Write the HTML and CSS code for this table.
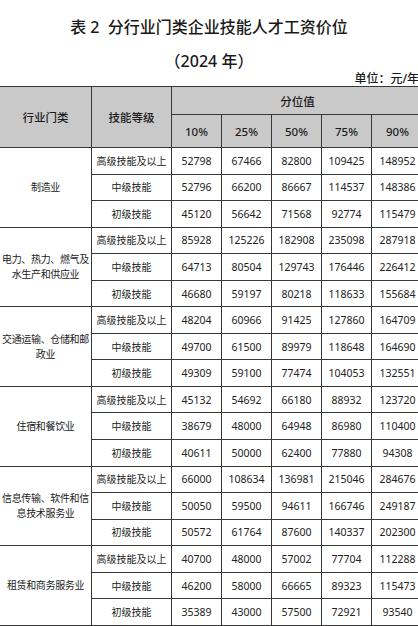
FILE: index.html
```html
<!DOCTYPE html>
<html lang="zh">
<head>
<meta charset="utf-8">
<link rel="stylesheet" href="styles.css">
</head>
<body>
<div class="page">
  <h1 class="title">表 2&nbsp; 分行业门类企业技能人才工资价位</h1>
  <div class="subtitle">（2024 年）</div>
  <div class="unit">单位：元/年</div>
  <table class="wage">
    <colgroup>
      <col class="c-ind"><col class="c-lvl"><col class="c-p"><col class="c-p"><col class="c-p"><col class="c-p"><col class="c-last">
    </colgroup>
    <thead>
      <tr class="h1">
        <th rowspan="2">行业门类</th>
        <th rowspan="2">技能等级</th>
        <th colspan="5">分位值</th>
      </tr>
      <tr class="h2">
        <th>10%</th><th>25%</th><th>50%</th><th>75%</th><th>90%</th>
      </tr>
    </thead>
    <tbody>
      <tr><td rowspan="3" class="ind">制造业</td><td class="lvl">高级技能及以上</td><td>52798</td><td>67466</td><td>82800</td><td>109425</td><td>148952</td></tr>
      <tr><td class="lvl">中级技能</td><td>52796</td><td>66200</td><td>86667</td><td>114537</td><td>148386</td></tr>
      <tr><td class="lvl">初级技能</td><td>45120</td><td>56642</td><td>71568</td><td>92774</td><td>115479</td></tr>

      <tr><td rowspan="3" class="ind">电力、热力、燃气及水生产和供应业</td><td class="lvl">高级技能及以上</td><td>85928</td><td>125226</td><td>182908</td><td>235098</td><td>287918</td></tr>
      <tr><td class="lvl">中级技能</td><td>64713</td><td>80504</td><td>129743</td><td>176446</td><td>226412</td></tr>
      <tr><td class="lvl">初级技能</td><td>46680</td><td>59197</td><td>80218</td><td>118633</td><td>155684</td></tr>

      <tr><td rowspan="3" class="ind">交通运输、仓储和邮政业</td><td class="lvl">高级技能及以上</td><td>48204</td><td>60966</td><td>91425</td><td>127860</td><td>164709</td></tr>
      <tr><td class="lvl">中级技能</td><td>49700</td><td>61500</td><td>89979</td><td>118648</td><td>164690</td></tr>
      <tr><td class="lvl">初级技能</td><td>49309</td><td>59100</td><td>77474</td><td>104053</td><td>132551</td></tr>

      <tr><td rowspan="3" class="ind">住宿和餐饮业</td><td class="lvl">高级技能及以上</td><td>45132</td><td>54692</td><td>66180</td><td>88932</td><td>123720</td></tr>
      <tr><td class="lvl">中级技能</td><td>38679</td><td>48000</td><td>64948</td><td>86980</td><td>110400</td></tr>
      <tr><td class="lvl">初级技能</td><td>40611</td><td>50000</td><td>62400</td><td>77880</td><td>94308</td></tr>

      <tr><td rowspan="3" class="ind">信息传输、软件和信息技术服务业</td><td class="lvl">高级技能及以上</td><td>66000</td><td>108634</td><td>136981</td><td>215046</td><td>284676</td></tr>
      <tr><td class="lvl">中级技能</td><td>50050</td><td>59500</td><td>94611</td><td>166746</td><td>249187</td></tr>
      <tr><td class="lvl">初级技能</td><td>50572</td><td>61764</td><td>87600</td><td>140337</td><td>202300</td></tr>

      <tr><td rowspan="3" class="ind">租赁和商务服务业</td><td class="lvl">高级技能及以上</td><td>40700</td><td>48000</td><td>57002</td><td>77704</td><td>112288</td></tr>
      <tr><td class="lvl">中级技能</td><td>46200</td><td>58000</td><td>66665</td><td>89323</td><td>115473</td></tr>
      <tr><td class="lvl">初级技能</td><td>35389</td><td>43000</td><td>57500</td><td>72921</td><td>93540</td></tr>
    </tbody>
  </table>
</div>
</body>
</html>
```
FILE: styles.css
```css
html, body {
  margin: 0;
  padding: 0;
  background: #ffffff;
}
body {
  width: 418px;
  height: 626px;
  overflow: hidden;
  font-family: "Noto Sans", "Noto Sans CJK SC", sans-serif;
  color: #1f1f1f;
}
.page {
  display: flex;
  flex-direction: column;
  align-items: stretch;
}
.title {
  margin: 17px 0 0;
  font-size: 16px;
  line-height: 20px;
  font-weight: 500;
  text-align: center;
  color: #1a1a1a;
}
.subtitle {
  margin-top: 14px;
  font-size: 16px;
  line-height: 20px;
  font-weight: 500;
  text-align: center;
  color: #1a1a1a;
}
.unit {
  margin-top: 1px;
  font-size: 12px;
  line-height: 14px;
  font-weight: 500;
  text-align: right;
  margin-right: -1px;
  color: #1a1a1a;
}
.wage {
  margin-left: -1px;
  width: 424px;
  table-layout: fixed;
  border-collapse: collapse;
  font-size: 10.5px;
}
.c-ind { width: 92px; }
.c-lvl { width: 80px; }
.c-p { width: 50px; }
.c-last { width: 52px; }
.wage th, .wage td {
  border: 1px solid #383838;
  padding: 0;
  text-align: center;
  vertical-align: middle;
}
.wage th {
  background: #c9c9c9;
  font-weight: 500;
  font-size: 11.5px;
  color: #1c1c1c;
}
.h1 { height: 28px; }
.h2 { height: 33px; }
.wage tbody tr { height: 26.56px; }
.wage td {
  color: #222;
  line-height: 14px;
}
.wage td.lvl {
  font-size: 10px;
}
.wage td.ind {
  padding: 0;
  font-size: 10px;
  letter-spacing: -0.35px;
  line-height: 15px;
}
```
